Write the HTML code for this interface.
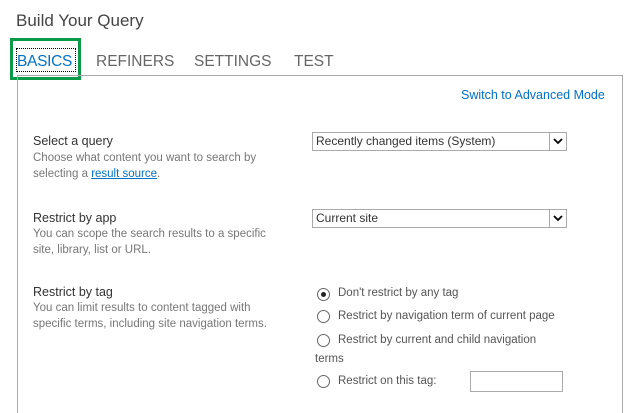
<!DOCTYPE html>
<html style="width:627px;height:413px;overflow:hidden"><head><style>
body{margin:0;width:627px;height:413px;background:#fff;font-family:"Liberation Sans",sans-serif;position:relative;overflow:hidden;color:#444}
.a{position:absolute;white-space:nowrap}
.t{font-size:17px;color:#444}
.tab{font-size:15.5px;color:#666;top:53px}
.lbl{font-size:12.5px;color:#333}
.d{font-size:11.5px;color:#777;line-height:16px}
.sel{position:absolute;left:312px;width:253px;height:17px;border:1px solid #aaa;font-size:12px;color:#333;line-height:17px;box-sizing:content-box}
.sel span{padding-left:3px}
.sel i{position:absolute;right:0;top:0;width:17px;height:17px;border-left:1px solid #aaa;box-sizing:border-box}
.r{position:absolute;width:11px;height:11px;border:1px solid #666;border-radius:50%}
.rt{font-size:11.5px;color:#555}
</style></head><body>
<div class="a t" style="left:16px;top:11px">Build Your Query</div>
<div class="a" style="left:10px;top:38px;width:65px;height:36px;border:3px solid #0a9a48"></div>
<div class="a" style="left:16px;top:48px;width:58px;height:22px;border:1px dotted #000"></div>
<div class="a tab" style="left:17px;color:#0072c6;letter-spacing:-0.3px">BASICS</div>
<div class="a tab" style="left:96px">REFINERS</div>
<div class="a tab" style="left:194px">SETTINGS</div>
<div class="a tab" style="left:294px">TEST</div>
<div class="a" style="left:17px;top:75px;width:604px;height:338px;border-left:1px solid #aaa;border-top:1px solid #aaa;border-right:1px solid #aaa;box-sizing:border-box;width:606px"></div>
<div class="a" style="left:461px;top:88px;font-size:12.5px;color:#0072c6">Switch to Advanced Mode</div>
<div class="a lbl" style="left:33px;top:134px">Select a query</div>
<div class="a d" style="left:33px;top:150px">Choose what content you want to search by<br>selecting a <span style="color:#0072c6;text-decoration:underline">result source</span>.</div>
<div class="sel" style="top:132px"><span>Recently changed items (System)</span><i><svg width="16" height="17"><path d="M4 6l4 4 4-4" stroke="#000" stroke-width="1.8" fill="none"/></svg></i></div>
<div class="a lbl" style="left:33px;top:211px">Restrict by app</div>
<div class="a d" style="left:33px;top:226px">You can scope the search results to a specific<br>site, library, list or URL.</div>
<div class="sel" style="top:209px"><span>Current site</span><i><svg width="16" height="17"><path d="M4 6l4 4 4-4" stroke="#000" stroke-width="1.8" fill="none"/></svg></i></div>
<div class="a lbl" style="left:33px;top:285px">Restrict by tag</div>
<div class="a d" style="left:33px;top:300px">You can limit results to content tagged with<br>specific terms, including site navigation terms.</div>
<div class="r" style="left:317px;top:288px"><div style="position:absolute;left:3px;top:3px;width:5px;height:5px;border-radius:50%;background:#222"></div></div>
<div class="a rt" style="left:338px;top:287px">Don't restrict by any tag</div>
<div class="r" style="left:317px;top:310px"></div>
<div class="a rt" style="left:338px;top:310px">Restrict by navigation term of current page</div>
<div class="r" style="left:317px;top:334px"></div>
<div class="a rt" style="left:338px;top:334px">Restrict by current and child navigation</div>
<div class="a rt" style="left:315px;top:353px">terms</div>
<div class="r" style="left:317px;top:375px"></div>
<div class="a rt" style="left:338px;top:375px">Restrict on this tag:</div>
<div class="a" style="left:470px;top:371px;width:91px;height:19px;border:1px solid #aaa"></div>
</body></html>
